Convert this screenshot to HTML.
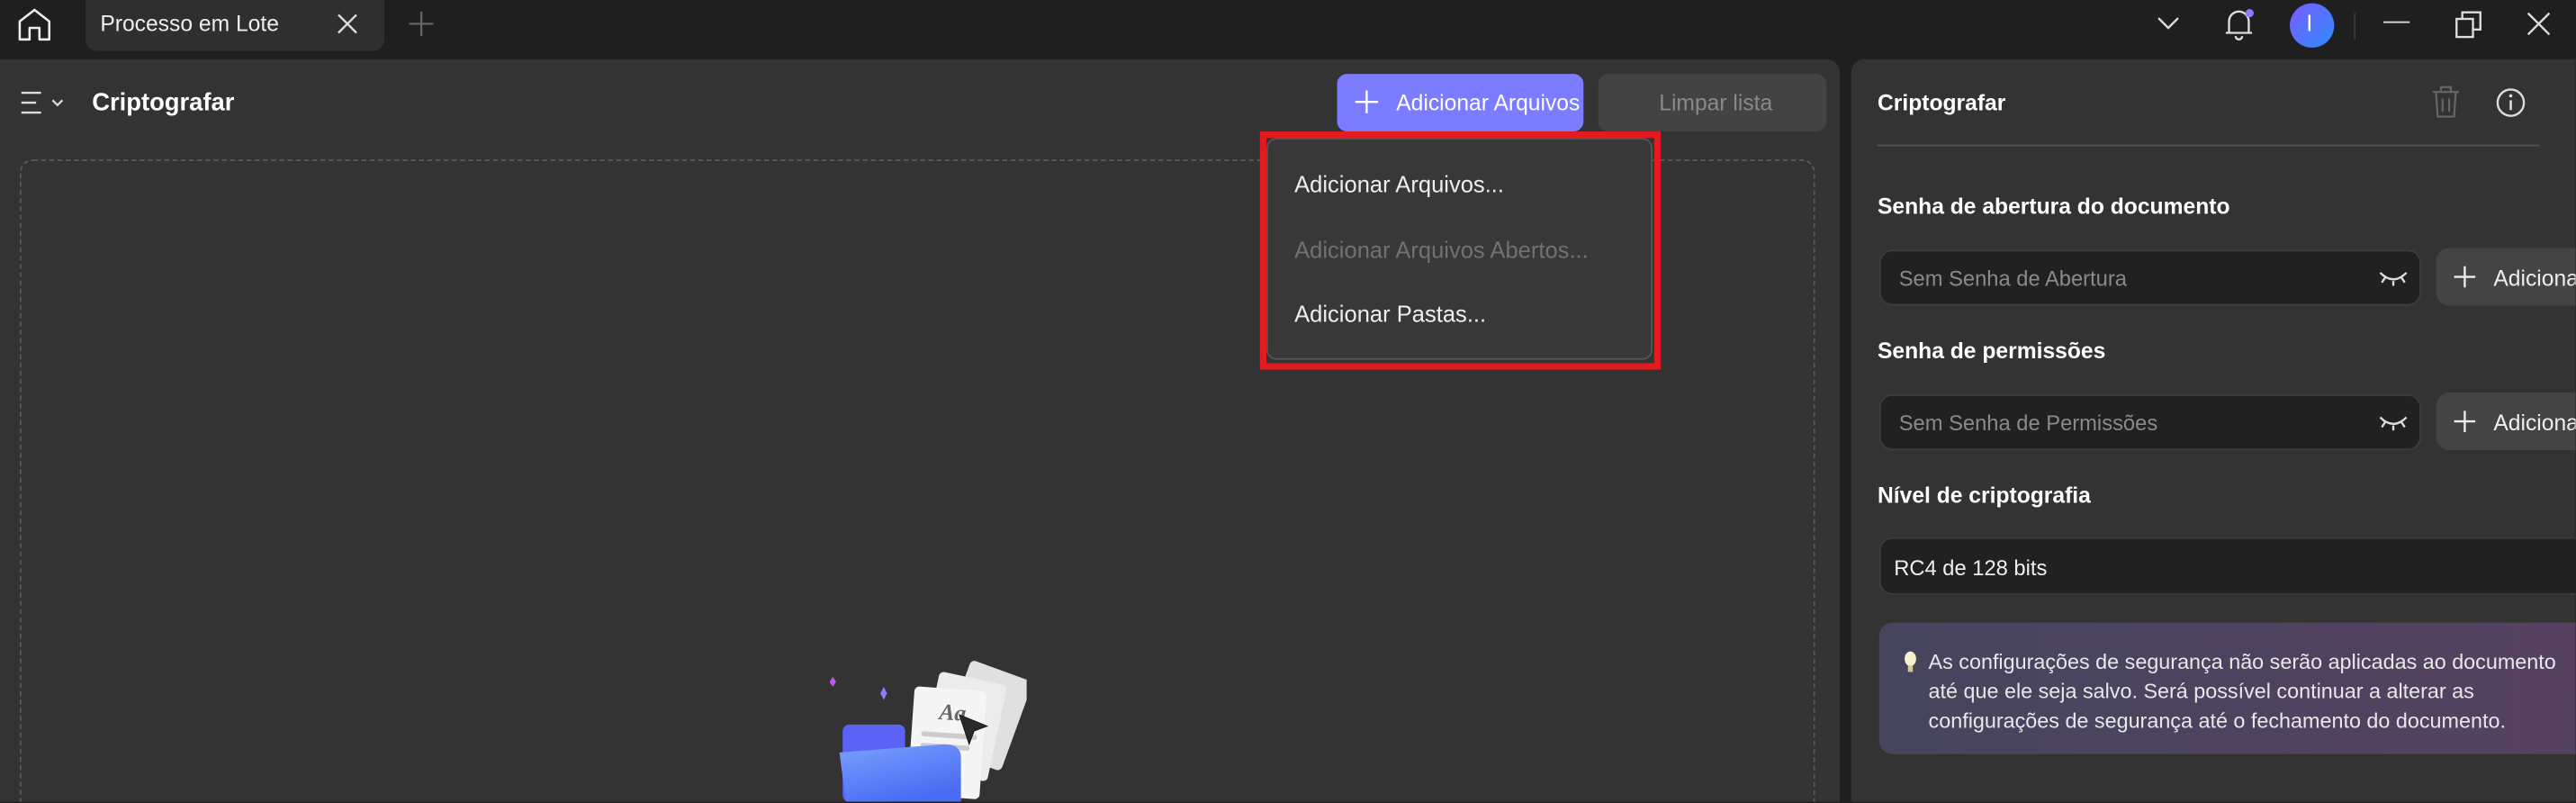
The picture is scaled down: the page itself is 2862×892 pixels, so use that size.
<!DOCTYPE html>
<html><head><meta charset="utf-8">
<style>
*{margin:0;padding:0;box-sizing:border-box}
html,body{width:2862px;height:892px;overflow:hidden;background:#1f1f1f}
#w{position:absolute;left:0;top:0;width:1568px;height:488px;transform:scale(1.825);transform-origin:0 0;font-family:"Liberation Sans",sans-serif;color:#fff;background:#1f1f1f;overflow:hidden}
.a{position:absolute}
.t{position:absolute;white-space:nowrap}
</style></head><body><div id="w">
<svg class="a" style="left:10px;top:4px" width="24" height="22" viewBox="0 0 24 22"><path d="M2 20V9L11 2L20 9V20H14V13H8V20Z" fill="none" stroke="#eee" stroke-width="1.4" stroke-linejoin="round"/></svg>
<div class="a" style="left:52px;top:0;width:182px;height:31px;background:#2f2f2f;border-radius:0 0 7px 7px"></div>
<div class="t" style="left:61px;top:7px;font-size:13.5px;color:#eee">Processo em Lote</div>
<svg class="a" style="left:205px;top:8px" width="13" height="13"><path d="M1 1L12 12M12 1L1 12" stroke="#ddd" stroke-width="1.3"/></svg>
<svg class="a" style="left:249px;top:7px" width="15" height="15"><path d="M7.5 0V15M0 7.5H15" stroke="#666" stroke-width="1.2"/></svg>
<svg class="a" style="left:1313px;top:9px" width="14" height="10"><path d="M1 2L7 8L13 2" fill="none" stroke="#ddd" stroke-width="1.3"/></svg>
<svg class="a" style="left:1353px;top:3px" width="22" height="24"><path d="M4 17V10A6 6 0 0 1 16 10V17H18H2Z" fill="none" stroke="#ddd" stroke-width="1.3"/><path d="M8 19A2 2 0 0 0 12 19" fill="none" stroke="#ddd" stroke-width="1.3"/><circle cx="16.5" cy="5" r="2.5" fill="#8a7cff"/></svg>
<div class="a" style="left:1394px;top:2px;width:27px;height:27px;border-radius:50%;background:linear-gradient(135deg,#7a5cff,#2e8cff)"></div>
<div class="t" style="left:1404px;top:6px;font-size:14px;color:#fff">I</div>
<div class="a" style="left:1433px;top:8px;width:1px;height:16px;background:#3a3a3a"></div>
<div class="a" style="left:1451px;top:13px;width:16px;height:1.4px;background:#ddd"></div>
<svg class="a" style="left:1494px;top:6px" width="18" height="18"><rect x="1.5" y="5.5" width="10" height="11" fill="none" stroke="#ddd" stroke-width="1.3"/><path d="M5 5V1.5H16V12H12" fill="none" stroke="#ddd" stroke-width="1.3"/></svg>
<svg class="a" style="left:1538px;top:7px" width="15" height="15"><path d="M1 1L14 14M14 1L1 14" stroke="#ddd" stroke-width="1.3"/></svg>

<div class="a" style="left:0;top:36px;width:1120px;height:452px;background:#333;border-radius:0 8px 0 0"></div>
<svg class="a" style="left:12px;top:55px" width="30" height="16"><path d="M1 1.5H13M1 7.5H10M1 13.5H13" stroke="#ddd" stroke-width="1.3"/><path d="M20 6L23 9L26 6" fill="none" stroke="#ddd" stroke-width="1.2"/></svg>
<div class="t" style="left:56px;top:54px;font-size:15px;font-weight:bold">Criptografar</div>
<div class="a" style="left:814px;top:45px;width:150px;height:35px;background:#7b7cff;border-radius:6px"></div>
<svg class="a" style="left:825px;top:55px" width="14" height="14"><path d="M7 0V14M0 7H14" stroke="#fff" stroke-width="1.3"/></svg>
<div class="t" style="left:850px;top:55px;font-size:13.5px">Adicionar Arquivos</div>
<div class="a" style="left:973px;top:45px;width:139px;height:35px;background:#434343;border-radius:6px"></div>
<div class="t" style="left:1010px;top:55px;font-size:13.5px;color:#8a8a8a">Limpar lista</div>
<div class="a" style="left:12px;top:97px;width:1093px;height:400px;border:1px dashed #5a5a5a;border-radius:8px"></div>

<svg class="a" style="left:495px;top:395px" width="130" height="93" viewBox="0 0 130 93">
<path d="M10 20L12 17L14 20L12 23Z" fill="#c257f0"/>
<path d="M41 27L43 23L45 27L43 31Z" fill="#8c7dff"/>
<g transform="rotate(20 105 50)"><rect x="82" y="12" width="40" height="58" rx="3" fill="#e0e0e0"/></g>
<g transform="rotate(12 95 50)"><rect x="70" y="18" width="42" height="60" rx="3" fill="#ececec"/></g>
<rect x="18" y="46" width="38" height="47" rx="4" fill="#5a63f5"/>
<g transform="rotate(4 80 50)"><rect x="60" y="24" width="44" height="66" rx="3" fill="#f5f5f5"/><text x="76" y="43" font-family="Liberation Serif,serif" font-style="italic" font-weight="bold" font-size="14" fill="#666">Aa</text><rect x="66" y="51" width="34" height="3" rx="1.5" fill="#ccc"/><rect x="66" y="58" width="30" height="3" rx="1.5" fill="#ccc"/><rect x="66" y="65" width="20" height="3" rx="1.5" fill="#ccc"/></g>
<path d="M89 40L106 47L98 50L95 58Z" fill="#2a2a2a" stroke="#111" stroke-width="0.5"/>
<path d="M16 63L80 58Q90 58 90 66V93H20Z" fill="url(#fg)"/>
<defs><linearGradient id="fg" x1="0" y1="0" x2="0.5" y2="1"><stop offset="0" stop-color="#7aa0ff"/><stop offset="1" stop-color="#4a6cf2"/></linearGradient></defs>
</svg>

<div class="a" style="left:771px;top:84px;width:235px;height:135px;background:#383838;border:1px solid #555;border-radius:6px"></div>
<div class="a" style="left:767px;top:80px;width:244px;height:145px;border:4px solid #e11b1f"></div>
<div class="t" style="left:788px;top:104px;font-size:14px;color:#eee">Adicionar Arquivos...</div>
<div class="t" style="left:788px;top:144px;font-size:14px;color:#717171">Adicionar Arquivos Abertos...</div>
<div class="t" style="left:788px;top:183px;font-size:14px;color:#eee">Adicionar Pastas...</div>

<div class="a" style="left:1127px;top:36px;width:441px;height:452px;background:#333;border-radius:8px 0 0 0"></div>
<div class="t" style="left:1143px;top:55px;font-size:13.5px;font-weight:bold">Criptografar</div>
<svg class="a" style="left:1479px;top:51px" width="20" height="22"><path d="M2 5H18M7 5V2H13V5M4 5L5 20H15L16 5M8 9V17M12 9V17" fill="none" stroke="#666" stroke-width="1.2"/></svg>
<svg class="a" style="left:1519px;top:53px" width="19" height="19"><circle cx="9.5" cy="9.5" r="8" fill="none" stroke="#ddd" stroke-width="1.3"/><path d="M9.5 8V14" stroke="#ddd" stroke-width="1.4"/><circle cx="9.5" cy="5.3" r="1" fill="#ddd"/></svg>
<div class="a" style="left:1143px;top:88px;width:403px;height:1px;background:#555"></div>
<div class="t" style="left:1143px;top:118px;font-size:13.5px;font-weight:bold">Senha de abertura do documento</div>
<div class="a" style="left:1144px;top:152px;width:330px;height:34px;background:#212121;border:1px solid #3c3c3c;border-radius:8px"></div>
<div class="t" style="left:1156px;top:162px;font-size:13px;color:#8a8a8a">Sem Senha de Abertura</div>
<svg class="a" style="left:1448px;top:163px" width="18" height="12"><path d="M1 3Q9 11 17 3M4 6L2 9M9 8V11M14 6L16 9" fill="none" stroke="#ddd" stroke-width="1.3"/></svg>
<div class="a" style="left:1483px;top:151px;width:90px;height:35px;background:#444;border-radius:8px 0 0 8px"></div>
<svg class="a" style="left:1494px;top:162px" width="13" height="13"><path d="M6.5 0V13M0 6.5H13" stroke="#eee" stroke-width="1.3"/></svg>
<div class="t" style="left:1518px;top:162px;font-size:13.5px;color:#eee">Adicionar</div>
<div class="t" style="left:1143px;top:206px;font-size:13.5px;font-weight:bold">Senha de permissões</div>
<div class="a" style="left:1144px;top:240px;width:330px;height:34px;background:#212121;border:1px solid #3c3c3c;border-radius:8px"></div>
<div class="t" style="left:1156px;top:250px;font-size:13px;color:#8a8a8a">Sem Senha de Permissões</div>
<svg class="a" style="left:1448px;top:251px" width="18" height="12"><path d="M1 3Q9 11 17 3M4 6L2 9M9 8V11M14 6L16 9" fill="none" stroke="#ddd" stroke-width="1.3"/></svg>
<div class="a" style="left:1483px;top:239px;width:90px;height:35px;background:#444;border-radius:8px 0 0 8px"></div>
<svg class="a" style="left:1494px;top:250px" width="13" height="13"><path d="M6.5 0V13M0 6.5H13" stroke="#eee" stroke-width="1.3"/></svg>
<div class="t" style="left:1518px;top:250px;font-size:13.5px;color:#eee">Adicionar</div>
<div class="t" style="left:1143px;top:294px;font-size:13.5px;font-weight:bold">Nível de criptografia</div>
<div class="a" style="left:1144px;top:327px;width:430px;height:35px;background:#212121;border:1px solid #3c3c3c;border-radius:8px 0 0 8px"></div>
<div class="t" style="left:1153px;top:338px;font-size:13px;color:#eee">RC4 de 128 bits</div>
<div class="a" style="left:1144px;top:379px;width:430px;height:80px;border-radius:8px 0 0 8px;background:linear-gradient(90deg,#46455d,#55415f)"></div>
<svg class="a" style="left:1158px;top:396px" width="10" height="14"><ellipse cx="5" cy="5" rx="3.5" ry="4.5" fill="#f5f0d0"/><rect x="3.5" y="9" width="3" height="4" fill="#d8c890"/></svg>
<div class="a" style="left:1174px;top:394px;font-size:12.8px;line-height:18px;color:#e8e8e8;width:392px">As configurações de segurança não serão aplicadas ao documento até que ele seja salvo. Será possível continuar a alterar as configurações de segurança até o fechamento do documento.</div>
</div></body></html>
